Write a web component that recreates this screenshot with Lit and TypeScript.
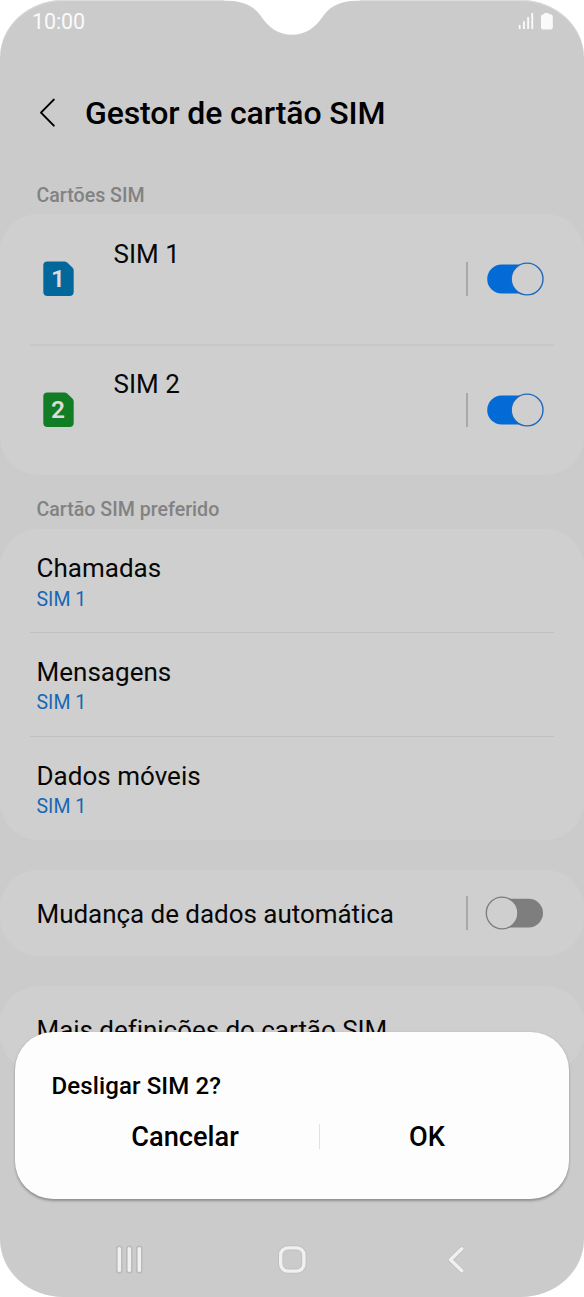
import { LitElement, html, css, svg } from "lit";
import { customElement, property } from "lit/decorators.js";
import { classMap } from "lit/directives/class-map.js";

@customElement("sim-toggle")
class SimToggle extends LitElement {
  @property({ type: Boolean }) on = false;

  static styles = css`
    :host { display: flex; align-items: center; gap: 17px; }
    .bar { width: 2px; height: 34px; background: #a8a8a8; }
    .thin { width: 1.5px; margin-right: 0.5px; }
    svg { display: block; }
  `;

  render() {
    return html`
      <span class=${classMap({ bar: true, thin: !this.on })}></span>
      <svg width="61" height="36" viewBox="-2 0 61 36">
        ${this.on
          ? svg`<rect x="0.2" y="3.6" width="50" height="29" rx="14.5" fill="#036bd5"/>
                <circle cx="40.1" cy="18" r="15.9" fill="#cfcfcf" stroke="#1c68bb" stroke-width="1.4"/>`
          : svg`<rect x="8" y="3.8" width="48" height="28.6" rx="14.3" fill="#7e7e7e"/>
                <circle cx="15.1" cy="18" r="15.8" fill="#cfcfcf" stroke="#7c7c7c" stroke-width="1.3"/>`}
      </svg>
    `;
  }
}

@customElement("sim-badge")
class SimBadge extends LitElement {
  @property({ type: Number }) slotNo = 1;

  static styles = css`
    :host { display: block; }
    svg { display: block; }
    .blue { fill: #02689c; }
    .green { fill: #117d24; }
    .digit { font: 600 24.5px Roboto, sans-serif; fill: #dcdcdc; text-anchor: middle; }
  `;

  render() {
    const tone = { blue: this.slotNo === 1, green: this.slotNo === 2 };
    return html`
      <svg width="31" height="36" viewBox="0 0 31 36">
        <path class=${classMap(tone)} d="M4.5 0.4H21.3Q23 0.4 24.2 1.5L29.6 6.7Q30.7 7.8 30.7 9.4V30.8Q30.7 35 26.5 35H4.5Q0.3 35 0.3 30.8V4.6Q0.3 0.4 4.5 0.4Z"/>
        <text class="digit" x="15" y="26">${this.slotNo}</text>
      </svg>
    `;
  }
}

@customElement("app-root")
class AppRoot extends LitElement {
  static styles = css`
    :host {
      display: block;
      width: 584px;
      height: 1297px;
      background: #fff;
      font-family: Roboto, sans-serif;
      color: #070707;
    }
    .phone {
      position: relative;
      display: flex;
      flex-direction: column;
      height: 1297px;
      background: #cbcbcb;
      border-radius: 63px / 58px;
      box-shadow: inset 0 1px 0 #dedede;
      overflow: hidden;
      white-space: nowrap;
    }
    .notch { position: absolute; left: 216px; top: 0; }
    .status {
      display: flex;
      justify-content: space-between;
      align-items: center;
      flex: none;
      height: 42px;
      padding: 0 31px 0 32px;
      color: #fafafa;
    }
    .clock { padding-top: 1px; font-size: 21.5px; line-height: 24px; letter-spacing: -0.1px; }
    .header {
      display: flex;
      align-items: center;
      flex: none;
      box-sizing: border-box;
      height: 133px;
      padding: 9px 0 0 39px;
      gap: 28px;
    }
    .title {
      margin: 0;
      font-size: 32px;
      line-height: 38px;
      font-weight: 500;
      letter-spacing: -0.12px;
      color: #000;
    }
    .label {
      flex: none;
      box-sizing: border-box;
      padding-left: 36.5px;
      font-size: 19.6px;
      font-weight: 500;
      color: #828282;
    }
    .first { height: 39px; line-height: 41px; }
    .second { height: 54px; padding-top: 14px; line-height: 42px; }
    .card { flex: none; background: #cfcfcf; border-radius: 38px; }
    .gap { margin-top: 30px; }
    .sim {
      display: flex;
      box-sizing: border-box;
      align-items: center;
      height: 130px;
      padding: 0 38px 0 43px;
    }
    .tall { height: 131px; }
    .name {
      align-self: flex-start;
      flex: 1;
      margin: 24px 0 0 39.5px;
      font-size: 26px;
      line-height: 32px;
    }
    .rule { height: 2px; margin: 0 30px -2px; background: #c8c8c8; }
    .hair { height: 1px; margin: 0 30px -1px; background: #c0c0c0; }
    .pref { box-sizing: border-box; height: 104px; padding: 24px 0 0 36.5px; }
    .main { font-size: 26px; line-height: 32px; letter-spacing: -0.04px; }
    .pref .main { letter-spacing: 0.02px; }
    .sub { font-size: 19.5px; line-height: 30px; color: #1867b4; }
    .short { height: 103px; padding-top: 23px; }
    .short .sub { padding-top: 1px; }
    .line {
      display: flex;
      justify-content: space-between;
      align-items: center;
      box-sizing: border-box;
      height: 86px;
      padding: 0 38px 0 36.5px;
    }
    .line .main { padding-top: 2px; }
    .dialog {
      position: absolute;
      left: 15px;
      top: 1032px;
      width: 554px;
      height: 167px;
      box-sizing: border-box;
      padding-top: 38px;
      background: #fdfdfd;
      border-radius: 38px;
      box-shadow: 0 1.5px 2.5px rgba(0, 0, 0, 0.3);
      color: #000;
      font-weight: 500;
    }
    .ask { padding-left: 36.5px; font-size: 24px; line-height: 32px; letter-spacing: 0.12px; }
    .actions {
      display: grid;
      grid-template-columns: 268px 1px 214px;
      align-items: center;
      height: 68px;
      padding-left: 36px;
    }
    .action { padding-top: 2px; text-align: center; font-size: 27.2px; line-height: 34px; }
    .split { height: 25px; background: #e2e2e2; }
    .nav { position: absolute; left: 0; top: 1236px; }
  `;

  render() {
    return html`
      <div class="phone">
        <div class="status">
          <span class="clock">10:00</span>
          <svg width="35" height="18" viewBox="0 0 35 18" fill="#fafafa">
            <rect x="0.7" y="13" width="1.9" height="4" rx="0.6"/>
            <rect x="5" y="9.2" width="1.9" height="7.8" rx="0.6"/>
            <rect x="9.2" y="5" width="1.9" height="12" rx="0.6"/>
            <rect x="13.3" y="1" width="1.9" height="16" rx="0.6"/>
            <path d="M26.8 0.9H30.2Q31 0.9 31.1 2.2H32.4Q34.8 2.5 34.8 4.6V15.6Q34.8 17.4 33 17.4H24.8Q23 17.4 23 15.6V4.6Q23 2.5 25.1 2.2H26Q26 0.9 26.8 0.9Z"/>
          </svg>
        </div>
        <div class="header">
          <svg width="18" height="30" viewBox="0 0 18 30" fill="none" stroke="#000" stroke-width="2" stroke-linecap="round" stroke-linejoin="round">
            <path d="M14.8 1.6L2 14.6L14.8 27.6"/>
          </svg>
          <h1 class="title">Gestor de cartão SIM</h1>
        </div>
        <div class="label first">Cartões SIM</div>
        <div class="card">
          <div class="sim">
            <sim-badge .slotNo=${1}></sim-badge>
            <span class="name">SIM 1</span>
            <sim-toggle .on=${true}></sim-toggle>
          </div>
          <div class="rule"></div>
          <div class="sim tall">
            <sim-badge .slotNo=${2}></sim-badge>
            <span class="name">SIM 2</span>
            <sim-toggle .on=${true}></sim-toggle>
          </div>
        </div>
        <div class="label second">Cartão SIM preferido</div>
        <div class="card">
          <div class="pref short"><div class="main">Chamadas</div><div class="sub">SIM 1</div></div>
          <div class="hair"></div>
          <div class="pref"><div class="main">Mensagens</div><div class="sub">SIM 1</div></div>
          <div class="hair"></div>
          <div class="pref"><div class="main">Dados móveis</div><div class="sub">SIM 1</div></div>
        </div>
        <div class="card gap line">
          <span class="main">Mudança de dados automática</span>
          <sim-toggle></sim-toggle>
        </div>
        <div class="card gap line">
          <span class="main">Mais definições do cartão SIM</span>
        </div>
        <svg class="notch" width="152" height="36" viewBox="0 0 152 36" fill="#fff">
          <path d="M8 0.6C24 0.8 36 4 44.5 15.5C53 28.5 63 34.8 76 34.8C89 34.8 99 28.5 107.5 15.5C116 4 128 0.8 144 0.6V0H8Z"/>
        </svg>
        <div class="dialog">
          <div class="ask">Desligar SIM 2?</div>
          <div class="actions">
            <span class="action">Cancelar</span>
            <span class="split"></span>
            <span class="action">OK</span>
          </div>
        </div>
        <svg class="nav" width="584" height="46" viewBox="0 0 584 46" fill="none" stroke-linecap="round" stroke-linejoin="round">
          <g stroke="#bababa">
            <path d="M119.3 12.8V34.4M129.3 12.8V34.4M139.3 12.8V34.4" stroke-width="6.4"/>
            <rect x="280.7" y="11.9" width="23.2" height="23.2" rx="7" stroke="#c0c0c0" stroke-width="5.2"/>
            <path d="M461.8 12.8L450.5 23.8L461.8 34.8" stroke="#c0c0c0" stroke-width="5.2"/>
          </g>
          <g stroke="#f0f0f0" stroke-width="3.4">
            <path d="M119.3 12.8V34.4M129.3 12.8V34.4M139.3 12.8V34.4"/>
            <rect x="280.7" y="11.9" width="23.2" height="23.2" rx="7"/>
            <path d="M461.8 12.8L450.5 23.8L461.8 34.8"/>
          </g>
        </svg>
      </div>
    `;
  }
}
